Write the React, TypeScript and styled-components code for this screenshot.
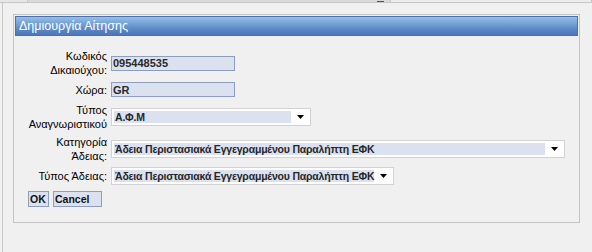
import React from 'react'
import styled, { createGlobalStyle } from 'styled-components'

const GlobalStyle = createGlobalStyle`
    html, body {
        margin: 0;
        padding: 0;
        background: #f0f0f0;
    }
    body {
        width: 592px;
        height: 252px;
        overflow: hidden;
        font-family: 'Liberation Sans', Arial, sans-serif;
    }
`

const Screen = styled.div`
    display: flex;
    flex-direction: column;
    height: 252px;
`

const TopStrip = styled.div`
    display: flex;
    height: 2px;
    border-bottom: 1px solid #c6c6c6;
`

const StripPart = styled.div<{ width?: number; shade: string }>`
    flex: ${(p) => (p.width ? `0 0 ${p.width}px` : '1')};
    background: ${(p) => p.shade};
    border-right: 1px solid #c6c6c6;
    position: relative;
`

const Dash = styled.span`
    position: absolute;
    right: 6px;
    top: 1px;
    width: 7px;
    height: 1px;
    background: #555;
`

const Workspace = styled.div`
    flex: 1;
    margin-left: 2px;
    border-left: 1px solid #c8c8c8;
`

const Dialog = styled.div`
    box-sizing: border-box;
    width: 567px;
    height: 209px;
    margin: 11px 0 0 10px;
    padding: 1px;
    border: 1px solid #c4c4c4;
`

const TitleBar = styled.div`
    box-sizing: border-box;
    height: 20px;
    padding-left: 3px;
    border: 1px solid #4b70b0;
    background: linear-gradient(#93bfe7, #5a86c4 70%, #4d77b7);
    color: #fff;
    font-size: 12.5px;
    line-height: 18px;
`

const Form = styled.div`
    display: grid;
    grid-template-columns: 80px auto;
    grid-template-rows: 28px 25px 29px 35px 19px;
    column-gap: 4px;
    align-items: center;
    justify-items: start;
    margin: 13px 0 0 12px;
`

const Label = styled.div`
    justify-self: end;
    text-align: right;
    font-size: 11px;
    line-height: 14px;
    color: #000;
`

const TextField = styled.input`
    box-sizing: border-box;
    width: 124px;
    height: 15px;
    margin: 0;
    padding: 0 1px;
    border: 1px solid #8d9dbd;
    background: #dbe1ee;
    color: #2a2a2a;
    font-family: 'Liberation Sans', Arial, sans-serif;
    font-size: 11px;
    font-weight: bold;
    outline: none;
`

const SelectBox = styled.div<{ width?: number }>`
    box-sizing: border-box;
    display: flex;
    width: ${(p) => (p.width ? `${p.width}px` : 'auto')};
    height: 18px;
    padding: 2px 0 2px 2px;
    border: 1px solid #d2d2d2;
    background: #fff;
`

const SelectValue = styled.div`
    flex: 1;
    padding-left: 1px;
    background: #dbe1ee;
    color: #262626;
    font-size: 10.5px;
    font-weight: bold;
    letter-spacing: -0.2px;
    line-height: 12px;
    white-space: nowrap;
`

const SelectArrow = styled.div`
    flex: 0 0 19px;
    display: flex;
    align-items: center;
    justify-content: center;
`

const Buttons = styled.div`
    display: flex;
    gap: 4px;
    margin: 6px 0 0 13px;
`

const Button = styled.button<{ width: number }>`
    box-sizing: border-box;
    width: ${(p) => p.width}px;
    height: 16px;
    margin: 0;
    padding: 0 0 0 1px;
    border: 1px solid #8d9dbd;
    background: #dbe1ee;
    color: #111;
    font-family: 'Liberation Sans', Arial, sans-serif;
    font-size: 10.5px;
    font-weight: bold;
    line-height: 14px;
    text-align: left;
`

type SelectProps = {
    value: string
    width?: number
}
const Select = ({ value, width }: SelectProps) => (
    <SelectBox width={width}>
        <SelectValue>{value}</SelectValue>
        <SelectArrow>
            <svg width="7" height="4" viewBox="0 0 7 4">
                <polygon points="0,0 7,0 3.5,4" fill="#000" />
            </svg>
        </SelectArrow>
    </SelectBox>
)

const permit = 'Άδεια Περιστασιακά Εγγεγραμμένου Παραλήπτη ΕΦΚ'

export default function App() {
    return (
        <>
            <GlobalStyle />
            <Screen>
                <TopStrip>
                    <StripPart width={27} shade="#e6e6e6" />
                    <StripPart width={362} shade="#d9d9d9">
                        <Dash />
                    </StripPart>
                    <StripPart shade="#ececec" />
                </TopStrip>
                <Workspace>
                    <Dialog>
                        <TitleBar>Δημιουργία Αίτησης</TitleBar>
                        <Form>
                            <Label>
                                Κωδικός
                                <br />
                                Δικαιούχου:
                            </Label>
                            <TextField readOnly value="095448535" />
                            <Label>Χώρα:</Label>
                            <TextField readOnly value="GR" />
                            <Label>
                                Τύπος
                                <br />
                                Αναγνωριστικού
                            </Label>
                            <Select value="Α.Φ.Μ" width={200} />
                            <Label>
                                Κατηγορία
                                <br />
                                Άδειας:
                            </Label>
                            <Select value={permit} width={454} />
                            <Label>Τύπος Άδειας:</Label>
                            <Select value={permit} />
                        </Form>
                        <Buttons>
                            <Button width={21}>OK</Button>
                            <Button width={49}>Cancel</Button>
                        </Buttons>
                    </Dialog>
                </Workspace>
            </Screen>
        </>
    )
}
